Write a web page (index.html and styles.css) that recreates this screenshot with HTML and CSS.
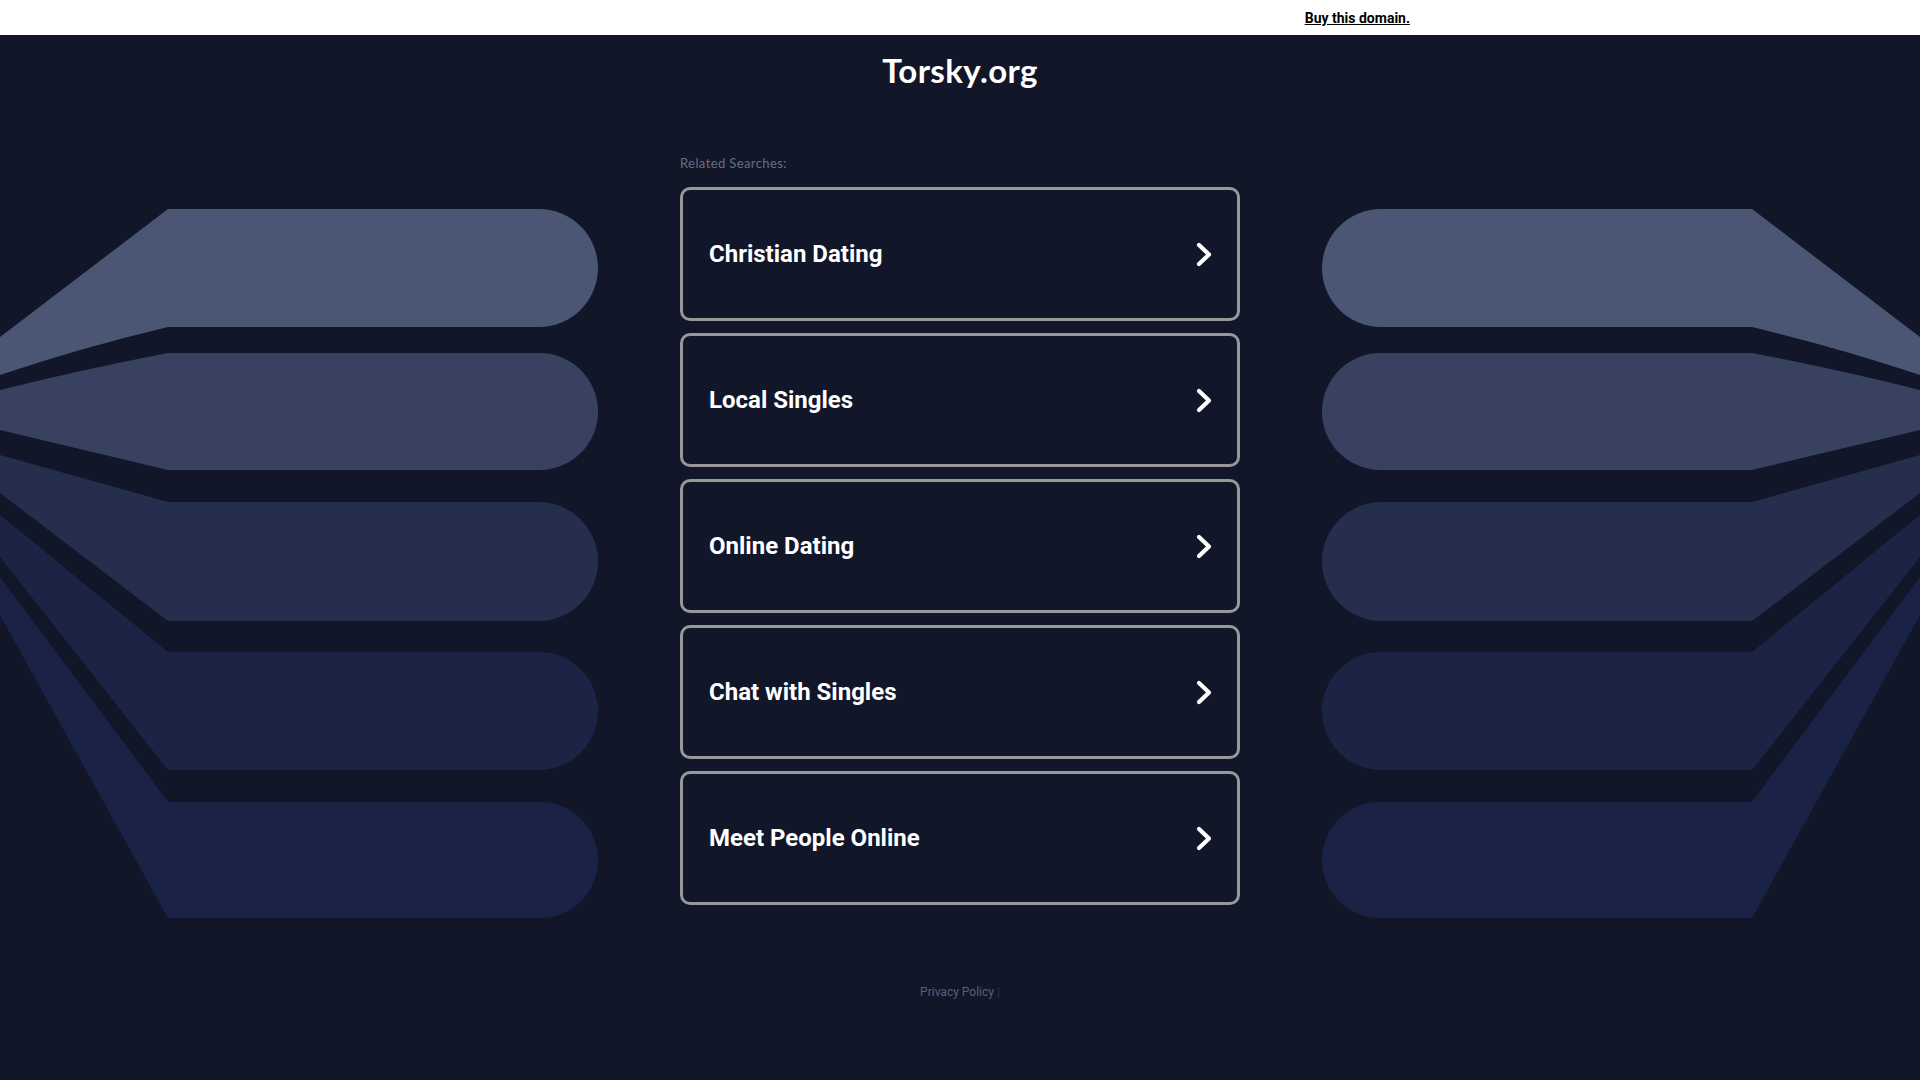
FILE: index.html
```html
<!DOCTYPE html>
<html lang="en">
<head>
  <meta charset="UTF-8">
  <meta name="viewport" content="width=device-width, initial-scale=1.0">
  <title>Torsky.org</title>
  <link rel="stylesheet" href="styles.css">
</head>
<body>
  <!-- top bar -->
  <div class="topbar">
    <div class="topbar-inner">
      <a href="#" class="buy-link">Buy this domain.</a>
    </div>
  </div>

  <h1 class="domain">Torsky.org</h1>

  <div class="stage">
    <!-- fan shapes, left -->
    <svg class="fan" width="598" height="765" viewBox="0 155 598 765" aria-hidden="true">
      <path fill="#4b5574" d="M0,337 L168,209 L539,209 A59,59 0 0 1 539,327 L168,327 Q80,348 0,375 Z"/>
      <path fill="#394160" d="M0,390 Q80,370 168,353 L539.5,353 A58.5,58.5 0 0 1 539.5,470 L168,470 L0,430 Z"/>
      <path fill="#262e4d" d="M0,455 L168,502 L538.5,502 A59.5,59.5 0 0 1 538.5,621 L168,621 L0,493 Z"/>
      <path fill="#1c2445" d="M0,515 L168,652 L539,652 A59,59 0 0 1 539,770 L168,770 L0,557 Z"/>
      <path fill="#1a2346" d="M0,577 L168,802 L540,802 A58,58 0 0 1 540,918 L168,918 L0,615 Z"/>
    </svg>

    <main class="content">
      <p class="related">Related Searches:</p>
      <a href="#" class="card"><span>Christian Dating</span><svg class="chev" width="16" height="25" viewBox="0 0 16 25"><polyline points="3,3 13,12.5 3,22"/></svg></a>
      <a href="#" class="card"><span>Local Singles</span><svg class="chev" width="16" height="25" viewBox="0 0 16 25"><polyline points="3,3 13,12.5 3,22"/></svg></a>
      <a href="#" class="card"><span>Online Dating</span><svg class="chev" width="16" height="25" viewBox="0 0 16 25"><polyline points="3,3 13,12.5 3,22"/></svg></a>
      <a href="#" class="card"><span>Chat with Singles</span><svg class="chev" width="16" height="25" viewBox="0 0 16 25"><polyline points="3,3 13,12.5 3,22"/></svg></a>
      <a href="#" class="card"><span>Meet People Online</span><svg class="chev" width="16" height="25" viewBox="0 0 16 25"><polyline points="3,3 13,12.5 3,22"/></svg></a>
    </main>

    <!-- fan shapes, right (mirrored) -->
    <svg class="fan fan-right" width="598" height="765" viewBox="0 155 598 765" aria-hidden="true">
      <path fill="#4b5574" d="M0,337 L168,209 L539,209 A59,59 0 0 1 539,327 L168,327 Q80,348 0,375 Z"/>
      <path fill="#394160" d="M0,390 Q80,370 168,353 L539.5,353 A58.5,58.5 0 0 1 539.5,470 L168,470 L0,430 Z"/>
      <path fill="#262e4d" d="M0,455 L168,502 L538.5,502 A59.5,59.5 0 0 1 538.5,621 L168,621 L0,493 Z"/>
      <path fill="#1c2445" d="M0,515 L168,652 L539,652 A59,59 0 0 1 539,770 L168,770 L0,557 Z"/>
      <path fill="#1a2346" d="M0,577 L168,802 L540,802 A58,58 0 0 1 540,918 L168,918 L0,615 Z"/>
    </svg>
  </div>

  <footer class="footer">
    <a href="#">Privacy Policy</a> <span class="sep">|</span>
  </footer>
</body>
</html>
```

FILE: styles.css
```css
body {
  margin: 0;
  background: #111729;
  font-family: Roboto, "Liberation Sans", Arial, sans-serif;
  color: #fff;
}
.topbar {
  background: #fff;
  height: 35px;
}
.topbar-inner {
  width: 900px;
  margin: 0 auto;
  text-align: right;
  line-height: 35px;
}
.buy-link {
  color: #000;
  font-size: 14px;
  font-weight: 700;
  text-decoration: underline;
}
.domain {
  margin: 16px 0 0;
  font-family: Lato, "Open Sans", sans-serif;
  font-size: 33px;
  font-weight: 700;
  letter-spacing: 0.4px;
  line-height: 38px;
  text-align: center;
}
.stage {
  display: flex;
  justify-content: space-between;
  align-items: flex-start;
  padding-top: 66px;
}
.fan {
  display: block;
  flex: none;
}
.fan-right {
  transform: scaleX(-1);
}
.content {
  width: 560px;
  flex: none;
}
.related {
  margin: 0 0 16px;
  font-family: Lato, "Open Sans", sans-serif;
  font-size: 13px;
  letter-spacing: 0.4px;
  line-height: 16px;
  color: #686e82;
}
.card {
  display: flex;
  align-items: center;
  justify-content: space-between;
  box-sizing: border-box;
  height: 134px;
  margin-bottom: 12px;
  padding: 0 25px 0 26px;
  border: 3px solid #989898;
  border-radius: 10px;
  color: #fff;
  text-decoration: none;
  font-size: 24px;
  font-weight: 700;
}
.chev polyline {
  fill: none;
  stroke: #fff;
  stroke-width: 4.2;
  stroke-linecap: round;
  stroke-linejoin: round;
}
.footer {
  margin-top: 64px;
  text-align: center;
  font-size: 12px;
  line-height: 16px;
}
.footer a {
  color: #596072;
  text-decoration: none;
}
.footer .sep {
  color: #2e3447;
}
```
